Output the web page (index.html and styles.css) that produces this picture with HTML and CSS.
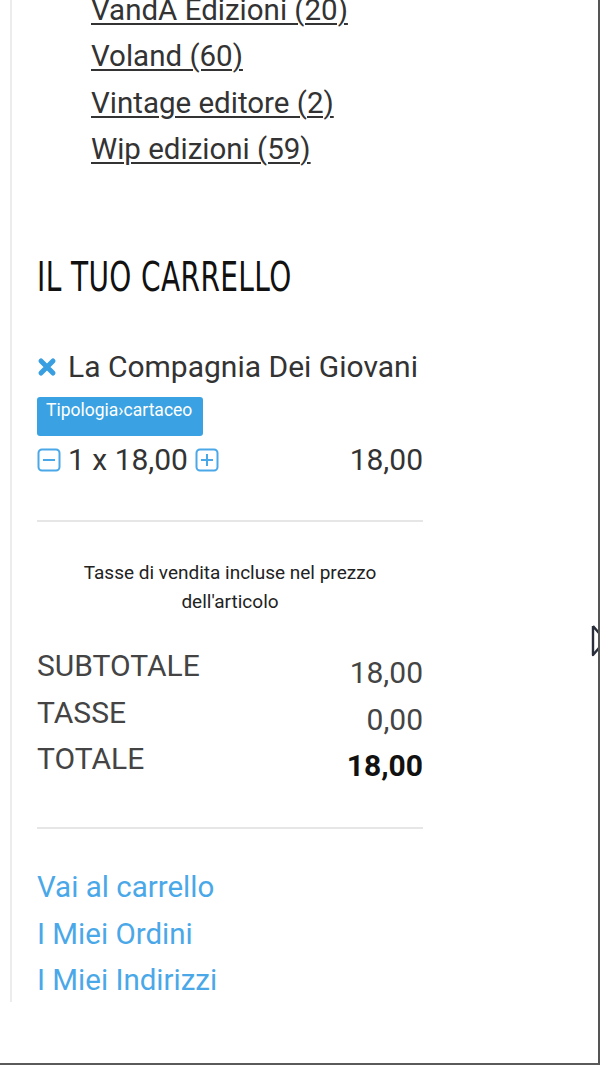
FILE: index.html
```html
<!DOCTYPE html>
<html lang="it">
<head>
<meta charset="utf-8">
<title>Carrello</title>
<link rel="stylesheet" href="styles.css">
</head>
<body>
<div class="frame">
  <aside class="sidebar">
    <ul class="publishers">
      <li><a href="#">VandA Edizioni (20)</a></li>
      <li><a href="#">Voland (60)</a></li>
      <li><a href="#">Vintage editore (2)</a></li>
      <li><a href="#">Wip edizioni (59)</a></li>
    </ul>

    <section class="cart">
      <h2 class="cart-title"><span>IL TUO CARRELLO</span></h2>

      <div class="item">
        <div class="item-name">
          <svg class="remove" viewBox="0 0 20 20" width="20" height="20" aria-hidden="true"><path d="M4 4 L16 16 M16 4 L4 16" stroke="#3a9fe0" stroke-width="5" stroke-linecap="round"/></svg>
          <span>La Compagnia Dei Giovani</span>
        </div>
        <div class="badge">Tipologia›cartaceo</div>
        <div class="qty-row">
          <div class="qty">
            <svg class="qbtn" viewBox="0 0 24 24" width="24" height="24" aria-hidden="true"><rect x="1.5" y="1.5" width="21" height="21" rx="3.5" fill="none" stroke="#4aa8e8" stroke-width="2"/><path d="M6 12 H18" stroke="#4aa8e8" stroke-width="2"/></svg>
            <span>1 x 18,00</span>
            <svg class="qbtn" viewBox="0 0 24 24" width="24" height="24" aria-hidden="true"><rect x="1.5" y="1.5" width="21" height="21" rx="3.5" fill="none" stroke="#4aa8e8" stroke-width="2"/><path d="M6 12 H18 M12 6 V18" stroke="#4aa8e8" stroke-width="2"/></svg>
          </div>
          <span class="price">18,00</span>
        </div>
      </div>

      <p class="tax-note">Tasse di vendita incluse nel prezzo dell'articolo</p>

      <dl class="totals">
        <div class="row"><dt>SUBTOTALE</dt><dd>18,00</dd></div>
        <div class="row"><dt>TASSE</dt><dd>0,00</dd></div>
        <div class="row total"><dt>TOTALE</dt><dd>18,00</dd></div>
      </dl>

      <nav class="cart-links">
        <a href="#">Vai al carrello</a>
        <a href="#">I Miei Ordini</a>
        <a href="#">I Miei Indirizzi</a>
      </nav>
    </section>
  </aside>
  <svg class="next-arrow" viewBox="0 0 10 34" width="10" height="34" aria-hidden="true"><path d="M2 2 L2 31 L8 24 M2 2 L8 9" fill="none" stroke="#2a2d3a" stroke-width="2.4" stroke-linejoin="round"/></svg>
</div>
</body>
</html>
```
FILE: styles.css
```css
html, body {
  margin: 0;
  padding: 0;
  background: #fff;
}

.frame {
  position: relative;
  width: 598px;
  height: 1063px;
  border-right: 2px solid #555;
  border-bottom: 2px solid #5a5a5a;
  overflow: hidden;
  font-family: Roboto, "Liberation Sans", sans-serif;
  color: #333;
}

.sidebar {
  margin-left: 10px;
  width: 413px;
  height: 1015px;
  border-left: 2px solid #ececec;
  padding-left: 25px;
  box-sizing: border-box;
  margin-top: -13px;
}

.publishers {
  list-style: none;
  margin: 0;
  padding: 0 0 0 54px;
}

.publishers li {
  font-size: 29.5px;
  line-height: 46.3px;
  white-space: nowrap;
}

.publishers a {
  color: #333;
  text-decoration: underline;
  text-decoration-thickness: 2px;
  text-underline-offset: 3px;
}

.cart {
  width: 386px;
  padding-top: 83px;
}

.cart-title {
  margin: 0;
  font-family: "DejaVu Sans Condensed", "Liberation Sans Narrow", sans-serif;
  font-weight: normal;
  font-size: 41px;
  letter-spacing: 0.5px;
  line-height: 44px;
  color: #111;
  white-space: nowrap;
}

.cart-title span {
  display: inline-block;
  transform: scaleX(0.76);
  transform-origin: left center;
}

.item {
  margin-top: 53px;
  border-bottom: 2px solid #e6e6e6;
  padding-bottom: 45px;
}

.item-name {
  display: flex;
  align-items: center;
  gap: 11px;
  font-size: 30px;
  line-height: 30px;
  white-space: nowrap;
}

.remove {
  display: block;
}

.badge {
  margin-top: 15px;
  width: 166px;
  height: 39px;
  box-sizing: border-box;
  background: #3aa2e2;
  border-radius: 3px;
  color: #fff;
  font-size: 17.5px;
  line-height: 18px;
  padding: 4px 0 0 9px;
  white-space: nowrap;
}

.qty-row {
  display: flex;
  justify-content: space-between;
  align-items: center;
  margin-top: 9px;
  font-size: 30px;
  line-height: 30px;
}

.qty {
  display: flex;
  align-items: center;
  gap: 7px;
}

.qbtn {
  display: block;
}

.tax-note {
  margin: 35.5px 0 0;
  padding: 0 30px;
  text-align: center;
  font-size: 19px;
  line-height: 29px;
  color: #222;
}

.totals {
  margin: 31.5px 0 0;
  padding-bottom: 40.5px;
  border-bottom: 2px solid #e6e6e6;
}

.row {
  display: flex;
  justify-content: space-between;
  font-size: 30px;
  line-height: 46.5px;
  color: #444;
}

.row dt {
  position: relative;
  top: -4px;
}

.row dd {
  margin: 0;
  position: relative;
  top: 3px;
}

.row.total dd {
  font-weight: bold;
  color: #111;
}

.cart-links {
  display: flex;
  flex-direction: column;
  padding-top: 35px;
}

.cart-links a {
  color: #4aa8e8;
  text-decoration: none;
  font-size: 29.5px;
  line-height: 46.5px;
}

.next-arrow {
  position: absolute;
  left: 591px;
  top: 624px;
}
```
